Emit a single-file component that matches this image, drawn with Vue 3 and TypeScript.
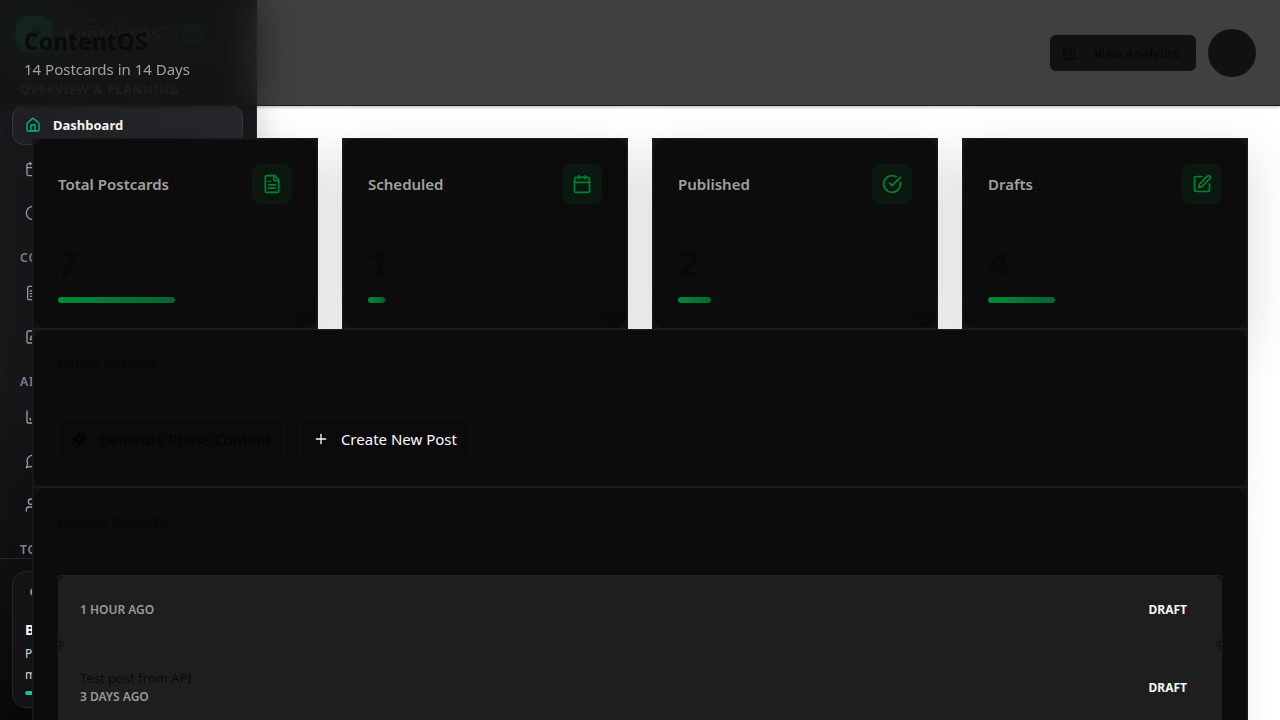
<script setup lang="ts">
interface Stat {
  label: string
  value: number
  icon: string[]
}
interface NavGroup {
  title: string
  items: { label: string; icon: string[]; active?: boolean }[]
}
interface Activity {
  title: string
  time: string
  status: string
}

const goal = 14

const icons: Record<string, string[]> = {
  home: ['M15 21v-8a1 1 0 0 0-1-1h-4a1 1 0 0 0-1 1v8', 'M3 10a2 2 0 0 1 .7-1.5l7-6a2 2 0 0 1 2.6 0l7 6A2 2 0 0 1 21 10v9a2 2 0 0 1-2 2H5a2 2 0 0 1-2-2z'],
  calendar: ['M8 2v4', 'M16 2v4', 'M5 4h14a2 2 0 0 1 2 2v14a2 2 0 0 1-2 2H5a2 2 0 0 1-2-2V6a2 2 0 0 1 2-2z', 'M3 10h18'],
  clock: ['M12 2a10 10 0 1 0 0 20a10 10 0 0 0 0-20z', 'M12 6v6l4 2'],
  file: ['M15 2H6a2 2 0 0 0-2 2v16a2 2 0 0 0 2 2h12a2 2 0 0 0 2-2V7z', 'M14 2v4a2 2 0 0 0 2 2h4', 'M10 9H8', 'M16 13H8', 'M16 17H8'],
  edit: ['M12 3H5a2 2 0 0 0-2 2v14a2 2 0 0 0 2 2h14a2 2 0 0 0 2-2v-7', 'M18.4 2.6a2.1 2.1 0 0 1 3 3l-9 9a2 2 0 0 1-.9.5l-2.9.9a.5.5 0 0 1-.6-.6l.9-2.9a2 2 0 0 1 .5-.9z'],
  check: ['M21.8 10A10 10 0 1 1 17 3.3', 'M9 11l3 3L22 4'],
  chart: ['M3 3v16a2 2 0 0 0 2 2h16', 'M18 17V9', 'M13 17V5', 'M8 17v-3'],
  message: ['M7.9 20A9 9 0 1 0 4 16.1L2 22z'],
  users: ['M16 21v-2a4 4 0 0 0-4-4H6a4 4 0 0 0-4 4v2', 'M9 3a4 4 0 1 0 0 8a4 4 0 0 0 0-8z', 'M22 21v-2a4 4 0 0 0-3-3.9'],
  sparkles: ['M9.9 15.5A2 2 0 0 0 8.5 14l-6.1-1.5a.5.5 0 0 1 0-1L8.5 10A2 2 0 0 0 9.9 8.5l1.6-6.1a.5.5 0 0 1 1 0L14 8.5A2 2 0 0 0 15.5 10l6.1 1.5a.5.5 0 0 1 0 1L15.5 14a2 2 0 0 0-1.5 1.5l-1.5 6.1a.5.5 0 0 1-1 0z', 'M20 3v4', 'M22 5h-4', 'M4 17v2', 'M5 18H3'],
  plus: ['M5 12h14', 'M12 5v14'],
}

const groups: NavGroup[] = [
  {
    title: 'Overview & Planning',
    items: [
      { label: 'Dashboard', icon: icons.home, active: true },
      { label: 'Calendar', icon: icons.calendar },
      { label: 'Schedule', icon: icons.clock },
    ],
  },
  {
    title: 'Content',
    items: [
      { label: 'Postcards', icon: icons.file },
      { label: 'Editor', icon: icons.edit },
    ],
  },
  {
    title: 'AI & Insights',
    items: [
      { label: 'Reports', icon: icons.chart },
      { label: 'Comments', icon: icons.message },
      { label: 'Audience', icon: icons.users },
    ],
  },
  { title: 'Tools', items: [] },
]

const stats: Stat[] = [
  { label: 'Total Postcards', value: 7, icon: icons.file },
  { label: 'Scheduled', value: 1, icon: icons.calendar },
  { label: 'Published', value: 2, icon: icons.check },
  { label: 'Drafts', value: 4, icon: icons.edit },
]

const activities: Activity[] = [
  { title: '', time: '1 hour ago', status: 'Draft' },
  { title: 'Test post from API', time: '3 days ago', status: 'Draft' },
]
</script>

<template>
  <div class="app">
    <aside class="sidebar">
      <div class="brand">
        <span class="logo">
          <svg class="icon" viewBox="0 0 24 24"><path v-for="d in icons.sparkles" :key="d" :d="d" /></svg>
        </span>
        <span class="brand-name">ContentOS</span>
        <span class="badge">JD</span>
        <svg class="icon cog" viewBox="0 0 24 24">
          <circle cx="12" cy="12" r="3" />
          <circle cx="12" cy="12" r="8" />
          <path d="M12 1v3M12 20v3M1 12h3M20 12h3M4 4l2 2M18 18l2 2M4 20l2-2M18 6l2-2" />
        </svg>
      </div>
      <nav class="nav">
        <section v-for="group in groups" :key="group.title" class="group">
          <h2 class="group-title">{{ group.title }}</h2>
          <a v-for="item in group.items" :key="item.label" href="#" class="nav-item" :class="{ active: item.active }">
            <svg class="icon" viewBox="0 0 24 24"><path v-for="d in item.icon" :key="d" :d="d" /></svg>
            <span>{{ item.label }}</span>
          </a>
        </section>
      </nav>
      <div class="side-foot">
        <div class="promo">
          <span class="bulb"></span>
          <strong>Build</strong>
          <p>Post<br />more</p>
          <span class="promo-bar"></span>
        </div>
      </div>
    </aside>

    <div class="page">
      <header class="header">
        <div class="heading">
          <h1>ContentOS</h1>
          <p>14 Postcards in 14 Days</p>
        </div>
        <div class="header-actions">
          <button type="button" class="analytics">
            <svg class="icon" viewBox="0 0 24 24"><path v-for="d in icons.chart" :key="d" :d="d" /></svg>
            View Analytics
          </button>
          <button type="button" class="avatar" aria-label="Account"></button>
        </div>
      </header>

      <main class="main">
        <div class="stats">
          <article v-for="stat in stats" :key="stat.label" class="card stat">
            <div class="inner">
              <div class="stat-head">
                <h3>{{ stat.label }}</h3>
                <span class="stat-icon">
                  <svg class="icon" viewBox="0 0 24 24"><path v-for="d in stat.icon" :key="d" :d="d" /></svg>
                </span>
              </div>
              <div class="value">{{ stat.value }}</div>
              <div class="track"><div class="fill" :style="{ width: (stat.value / goal) * 100 + '%' }"></div></div>
            </div>
          </article>
        </div>

        <section class="card">
          <div class="inner quick">
            <h2>Quick Actions</h2>
            <div class="buttons">
              <button type="button" class="action">
                <svg class="icon" viewBox="0 0 24 24"><path v-for="d in icons.sparkles" :key="d" :d="d" /></svg>
                Generate Phase Content
              </button>
              <button type="button" class="action bright">
                <svg class="icon" viewBox="0 0 24 24"><path v-for="d in icons.plus" :key="d" :d="d" /></svg>
                Create New Post
              </button>
            </div>
          </div>
        </section>

        <section class="card">
          <div class="inner recent">
            <h2>Recent Activity</h2>
            <ul class="list">
              <li v-for="item in activities" :key="item.time">
                <div class="entry">
                  <div>
                    <p v-if="item.title" class="entry-title">{{ item.title }}</p>
                    <p class="entry-time">{{ item.time }}</p>
                  </div>
                  <span class="status">{{ item.status }}</span>
                </div>
              </li>
            </ul>
          </div>
        </section>
      </main>
    </div>
  </div>
</template>

<style>
body {
  background: #fff;
}
</style>

<style scoped>
* {
  box-sizing: border-box;
}
h1, h2, h3, p, ul {
  margin: 0;
  padding: 0;
}
button {
  font: inherit;
}
.app {
  display: grid;
  grid-template-columns: 257px minmax(0, 1fr);
  grid-template-rows: 100vh;
  height: 100vh;
  overflow: hidden;
  background: #fff;
  font-family: "Segoe UI", "Noto Sans", sans-serif;
  color: #0a0a0a;
}
.icon {
  width: 16px;
  height: 16px;
  flex: none;
  fill: none;
  stroke: currentColor;
  stroke-width: 2;
  stroke-linecap: round;
  stroke-linejoin: round;
}

/* sidebar */
.sidebar {
  grid-area: 1 / 1;
  display: flex;
  flex-direction: column;
  background: linear-gradient(#18181b 50%, #09090b);
  border-right: 1px solid #29292d;
  box-shadow: 4px 0 24px rgba(0, 0, 0, 0.14);
}
.brand {
  display: flex;
  align-items: center;
  gap: 12px;
  padding: 16px 16px 13px;
}
.logo {
  flex: none;
  display: grid;
  place-items: center;
  width: 36px;
  height: 36px;
  border-radius: 12px;
  background: #009966;
  box-shadow: 0 4px 16px #00996655;
}
.brand-name {
  font-size: 18px;
  font-weight: 700;
  line-height: 28px;
  color: #71717a;
}
.badge {
  flex: none;
  margin-left: auto;
  width: 22px;
  height: 22px;
  border-radius: 50%;
  background: #05603a;
  font-size: 11px;
  line-height: 22px;
  text-align: center;
}
.cog {
  margin: 0 4px;
}
.nav {
  flex: 1;
  min-height: 0;
  overflow: hidden;
  padding: 0 13px 0 12px;
}
.group {
  display: flex;
  flex-direction: column;
  gap: 4px;
  padding-top: 17px;
}
.group-title {
  margin: 0 0 3px;
  padding-left: 8px;
  font-size: 12px;
  font-weight: 600;
  line-height: 16px;
  letter-spacing: 1px;
  text-transform: uppercase;
  white-space: nowrap;
  color: #85858e;
}
.nav-item {
  display: flex;
  align-items: center;
  gap: 12px;
  height: 40px;
  padding: 0 12px;
  border: 1px solid transparent;
  border-radius: 12px;
  font-size: 13px;
  font-weight: 500;
  text-decoration: none;
  color: #9f9fa9;
}
.nav-item.active {
  background: linear-gradient(90deg, #202024, #27272c);
  border-color: #36363b;
  color: #fafafa;
  font-weight: 700;
}
.nav-item.active .icon {
  color: #00bc7d;
}
.side-foot {
  padding: 12px;
  border-top: 1px solid #27272a;
}
.promo {
  display: flex;
  flex-direction: column;
  height: 137px;
  padding: 16px 12px;
  border: 1px solid #27272a;
  border-radius: 14px;
  background: #141417;
  font-size: 12px;
  line-height: 21px;
  color: #d4d4d8;
}
.promo strong {
  margin-top: 22px;
  font-size: 14px;
  line-height: 24px;
  color: #fff;
}
.promo p {
  padding-top: 1px;
}
.bulb {
  flex: none;
  width: 8px;
  height: 8px;
  margin-left: 5px;
  border-radius: 50%;
  background: #c4892f;
}
.promo-bar {
  flex: none;
  width: 60px;
  height: 4px;
  margin-top: 6px;
  border-radius: 2px;
  background: #00d492;
}

/* page */
.page {
  grid-area: 1 / 1 / 2 / 3;
  position: relative;
}
.header {
  position: relative;
  z-index: 2;
  display: flex;
  align-items: center;
  justify-content: space-between;
  padding: 24px;
  background: rgba(20, 20, 20, 0.81);
  border-bottom: 1px solid #1c1c1c;
  box-shadow: 0 1px 3px rgba(0, 0, 0, 0.3);
}
.header::before {
  content: "";
  position: absolute;
  inset: 0;
  z-index: -1;
  backdrop-filter: blur(20px);
  opacity: 0.7;
}
h1 {
  padding-top: 2px;
  font-size: 23px;
  font-weight: 700;
  line-height: 31px;
}
.heading p {
  font-size: 15px;
  line-height: 24px;
  color: #a1a1a1;
}
.header-actions {
  display: flex;
  align-items: center;
  gap: 12px;
}
.analytics {
  display: flex;
  align-items: center;
  gap: 16px;
  width: 146px;
  height: 36px;
  padding: 0 12px;
  border: 0;
  border-radius: 6px;
  background: #111;
  font-size: 13px;
  white-space: nowrap;
  color: #070707;
}
.avatar {
  width: 48px;
  height: 48px;
  padding: 0;
  border: 0;
  border-radius: 50%;
  background: #111;
}
.main {
  padding: 32px;
}
.stats {
  display: grid;
  grid-template-columns: repeat(4, minmax(0, 1fr));
  gap: 24px;
}
.card {
  position: relative;
  border: 1px solid #1c1c1c;
  background: #131313;
  box-shadow: 0 8px 32px rgba(0, 0, 0, 0.06);
}
.stat {
  box-shadow: 0 16px 48px rgba(0, 0, 0, 0.15);
}
.inner {
  padding: 24px;
  border: 1px solid #0f0f0f;
  border-radius: 12px;
  background: #0c0c0c;
}
.stat .inner {
  height: 189px;
}
.stat-head {
  display: flex;
  align-items: center;
  justify-content: space-between;
}
h3 {
  font-size: 15px;
  font-weight: 600;
  line-height: 24px;
  color: #a1a1a1;
}
.stat-icon {
  display: grid;
  place-items: center;
  width: 40px;
  height: 40px;
  border-radius: 8px;
  background: #0a180f;
  color: #008236;
}
.stat-icon .icon {
  width: 20px;
  height: 20px;
}
.value {
  margin-top: 40px;
  font-size: 36px;
  font-weight: 700;
  line-height: 40px;
  color: #090909;
}
.track {
  height: 6px;
  margin-top: 13px;
  border-radius: 3px;
  background: #0d0d0d;
}
.fill {
  height: 6px;
  border-radius: 3px;
  background: linear-gradient(90deg, #008a3a, #016630);
}
.card h2 {
  font-size: 15px;
  font-weight: 600;
  line-height: 16px;
  color: #080808;
}
.quick {
  height: 156px;
}
.buttons {
  display: flex;
  gap: 16px;
  margin-top: 46px;
}
.action {
  display: flex;
  align-items: center;
  gap: 12px;
  height: 44px;
  padding: 0 12px;
  border: 1px solid #101010;
  border-radius: 6px;
  background: #0b0b0b;
  font-size: 15px;
  white-space: nowrap;
  color: #030303;
}
.action.bright {
  color: #fafafa;
}
.recent {
  padding-bottom: 32px;
}
.list {
  margin-top: 46px;
  list-style: none;
}
.list li {
  border: 1px solid #202020;
  border-bottom: 0;
  background: #111;
}
.entry {
  display: flex;
  align-items: center;
  justify-content: space-between;
  padding: 24px 34px 24px 21px;
  border-radius: 8px;
  background: #1e1e1e;
}
.entry-title {
  font-size: 13px;
  line-height: 18px;
  color: #0a0a0a;
}
.entry-time,
.status {
  font-size: 12px;
  font-weight: 600;
  line-height: 20px;
  text-transform: uppercase;
  color: #9a9a9a;
}
.status {
  font-weight: 700;
  color: #f5f5f5;
}
</style>
